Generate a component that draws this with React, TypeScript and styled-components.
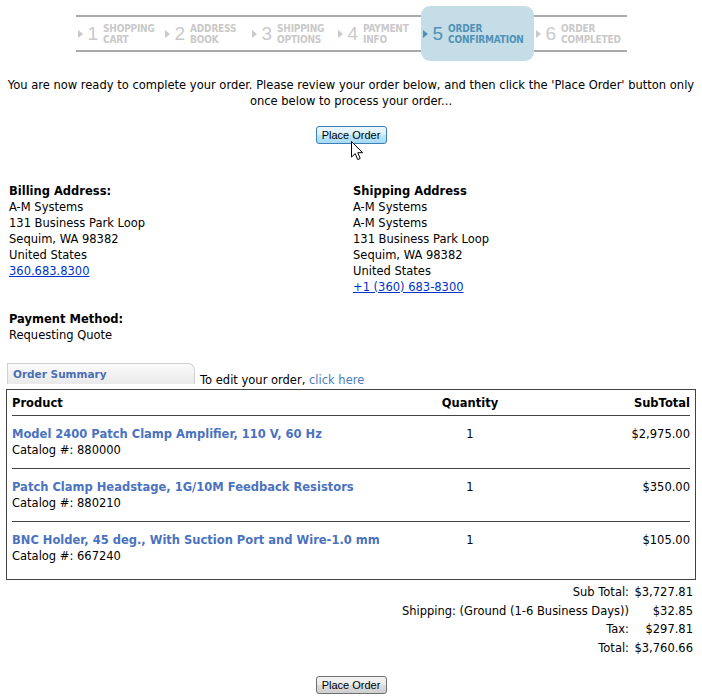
import React from 'react';
import styled, { createGlobalStyle } from 'styled-components';

const GlobalStyle = createGlobalStyle`
  body {
    margin: 0;
    background: #fff;
    font-family: "DejaVu Sans", Verdana, sans-serif;
    font-size: 11.5px;
    color: #000;
  }
`;

const Page = styled.div`
  width: 702px;
  padding-top: 6px;
`;

const Stepper = styled.div`
  display: flex;
  width: 551px;
  margin: 9px auto 0;
  height: 33px;
  border-top: 2px solid #aaa;
  border-bottom: 2px solid #aaa;
  font-family: "Liberation Sans Narrow", "DejaVu Sans Condensed", sans-serif;
`;

const Step = styled.div<{ $w: number; $active?: boolean }>`
  width: ${p => p.$w}px;
  display: flex;
  align-items: center;
  padding-left: 2px;
  box-sizing: border-box;
  overflow: hidden;
  color: ${p => (p.$active ? '#4f92b6' : '#c9c9c9')};
  background: ${p => (p.$active ? '#c5dde7' : 'transparent')};
  border-radius: ${p => (p.$active ? '9px' : '0')};
  margin: ${p => (p.$active ? '-11px 0' : '0')};
`;

const Arrow = styled.span`
  flex: none;
  width: 0;
  height: 0;
  border-top: 4px solid transparent;
  border-bottom: 4px solid transparent;
  border-left: 5px solid currentColor;
  margin-right: 5px;
`;

const StepNum = styled.span`
  font-family: "Liberation Sans", Arial, sans-serif;
  font-size: 19px;
  margin-right: 5px;
  line-height: 1;
`;

const StepLabel = styled.span`
  font-weight: bold;
  font-size: 10px;
  line-height: 11px;
  letter-spacing: -0.2px;
  text-transform: uppercase;
  white-space: nowrap;
`;

const Intro = styled.p`
  margin: 25px 4px 0;
  text-align: center;
  font-family: "DejaVu Sans Condensed", Tahoma, sans-serif;
  font-size: 12.8px;
  line-height: 16px;
`;

const ButtonRow = styled.div<{ $top: number }>`
  display: flex;
  justify-content: center;
  margin-top: ${p => p.$top}px;
`;

const ButtonWrap = styled.div`
  position: relative;
`;

const OrderButton = styled.button<{ $hover?: boolean }>`
  font-family: "Liberation Sans", Tahoma, sans-serif;
  font-size: 11px;
  height: 18px;
  width: 71px;
  padding: 0;
  color: #000;
  border-radius: 3px;
  border: 1px solid ${p => (p.$hover ? '#3c7fb1' : '#707070')};
  background: ${p =>
    p.$hover
      ? 'linear-gradient(#eaf6fd 0%, #d9f0fc 50%, #bee6fd 51%, #a7d9f5 100%)'
      : 'linear-gradient(#f2f2f2 0%, #ebebeb 50%, #dddddd 51%, #cfcfcf 100%)'};
`;

const Cursor = styled.svg`
  position: absolute;
  left: 35px;
  top: 15px;
`;

const Addresses = styled.div`
  display: grid;
  grid-template-columns: 344px 1fr;
  padding-left: 9px;
  margin-top: 39px;
  line-height: 16px;
`;

const Block = styled.div`
  display: flex;
  flex-direction: column;
`;

const Heading = styled.b`
  font-weight: bold;
`;

const Phone = styled.a`
  color: #0033cc;
  text-decoration: underline;
`;

const Payment = styled(Block)`
  padding-left: 9px;
  margin-top: 16px;
  line-height: 16px;
`;

const SummaryBar = styled.div`
  display: flex;
  align-items: flex-end;
  margin: 20px 0 0 7px;
`;

const Tab = styled.div`
  width: 188px;
  height: 21px;
  box-sizing: border-box;
  border: 1px solid #d0d0d0;
  border-bottom: none;
  border-top-right-radius: 7px;
  background: linear-gradient(#fbfbfb, #e9e9e9);
  color: #4a6fb5;
  font-weight: bold;
  font-size: 10.5px;
  padding: 4px 0 0 5px;
`;

const EditNote = styled.span`
  margin: 0 0 -3px 5px;
  line-height: 14px;
`;

const LinkText = styled.a`
  color: #4a7cc0;
  text-decoration: none;
`;

const Table = styled.div`
  margin: 5px 6px 0;
  border: 1px solid #444;
  padding: 0 5px 4px;
`;

const Row = styled.div<{ $head?: boolean }>`
  display: grid;
  grid-template-columns: 1fr 120px 160px;
  align-items: ${p => (p.$head ? 'center' : 'start')};
  height: ${p => (p.$head ? 26 : 53)}px;
  box-sizing: border-box;
  padding-top: ${p => (p.$head ? 0 : 10)}px;
  border-bottom: 1px solid #444;
  line-height: 16px;
  font-weight: ${p => (p.$head ? 'bold' : 'normal')};
  &:last-child {
    border-bottom: none;
  }
`;

const Cell = styled.div<{ $align?: string }>`
  text-align: ${p => p.$align ?? 'left'};
`;

const ProductName = styled.a`
  display: block;
  color: #4a72bf;
  font-weight: bold;
  text-decoration: none;
`;

const Totals = styled.div`
  display: grid;
  grid-template-columns: auto 64px;
  justify-content: end;
  margin: 3px 9px 0 0;
  line-height: 18.7px;
`;

const TotalLabel = styled.div`
  text-align: right;
`;

const TotalValue = styled.div`
  text-align: right;
`;

const items = [
  { name: 'Model 2400 Patch Clamp Amplifier, 110 V, 60 Hz', cat: '880000', qty: 1, sub: '$2,975.00' },
  { name: 'Patch Clamp Headstage, 1G/10M Feedback Resistors', cat: '880210', qty: 1, sub: '$350.00' },
  { name: 'BNC Holder, 45 deg., With Suction Port and Wire-1.0 mm', cat: '667240', qty: 1, sub: '$105.00' },
];

const steps = [
  { n: 1, a: 'Shopping', b: 'Cart', w: 87 },
  { n: 2, a: 'Address', b: 'Book', w: 87 },
  { n: 3, a: 'Shipping', b: 'Options', w: 86 },
  { n: 4, a: 'Payment', b: 'Info', w: 85 },
  { n: 5, a: 'Order', b: 'Confirmation', w: 113, active: true },
  { n: 6, a: 'Order', b: 'Completed', w: 93 },
];

const totals = [
  ['Sub Total:', '$3,727.81'],
  ['Shipping: (Ground (1-6 Business Days))', '$32.85'],
  ['Tax:', '$297.81'],
  ['Total:', '$3,760.66'],
];

export default function App() {
  return (
    <Page>
      <GlobalStyle />
      <Stepper>
        {steps.map(s => (
          <Step key={s.n} $w={s.w} $active={s.active}>
            <Arrow />
            <StepNum>{s.n}</StepNum>
            <StepLabel>
              {s.a}
              <br />
              {s.b}
            </StepLabel>
          </Step>
        ))}
      </Stepper>

      <Intro>
        You are now ready to complete your order. Please review your order below, and then click the 'Place Order' button
        only once below to process your order...
      </Intro>

      <ButtonRow $top={17}>
        <ButtonWrap>
          <OrderButton $hover>Place Order</OrderButton>
          <Cursor width="13" height="20" viewBox="0 0 13 20">
            <path d="M0.5 0.5 L0.5 16 L4.2 12.6 L6.7 18.6 L9.2 17.5 L6.8 11.7 L11.6 11.7 Z" fill="#fff" stroke="#000" strokeWidth="1" />
          </Cursor>
        </ButtonWrap>
      </ButtonRow>

      <Addresses>
        <Block>
          <Heading>Billing Address:</Heading>
          <span>A-M Systems</span>
          <span>131 Business Park Loop</span>
          <span>Sequim, WA 98382</span>
          <span>United States</span>
          <span><Phone href="#">360.683.8300</Phone></span>
        </Block>
        <Block>
          <Heading>Shipping Address</Heading>
          <span>A-M Systems</span>
          <span>A-M Systems</span>
          <span>131 Business Park Loop</span>
          <span>Sequim, WA 98382</span>
          <span>United States</span>
          <span><Phone href="#">+1 (360) 683-8300</Phone></span>
        </Block>
      </Addresses>

      <Payment>
        <Heading>Payment Method:</Heading>
        <span>Requesting Quote</span>
      </Payment>

      <SummaryBar>
        <Tab>Order Summary</Tab>
        <EditNote>
          To edit your order, <LinkText href="#">click here</LinkText>
        </EditNote>
      </SummaryBar>

      <Table>
        <Row $head>
          <Cell>Product</Cell>
          <Cell $align="center">Quantity</Cell>
          <Cell $align="right">SubTotal</Cell>
        </Row>
        {items.map(it => (
          <Row key={it.cat}>
            <Cell>
              <ProductName href="#">{it.name}</ProductName>
              Catalog #: {it.cat}
            </Cell>
            <Cell $align="center">{it.qty}</Cell>
            <Cell $align="right">{it.sub}</Cell>
          </Row>
        ))}
      </Table>

      <Totals>
        {totals.map(([l, v]) => (
          <React.Fragment key={l}>
            <TotalLabel>{l}</TotalLabel>
            <TotalValue>{v}</TotalValue>
          </React.Fragment>
        ))}
      </Totals>

      <ButtonRow $top={18}>
        <OrderButton>Place Order</OrderButton>
      </ButtonRow>
    </Page>
  );
}
